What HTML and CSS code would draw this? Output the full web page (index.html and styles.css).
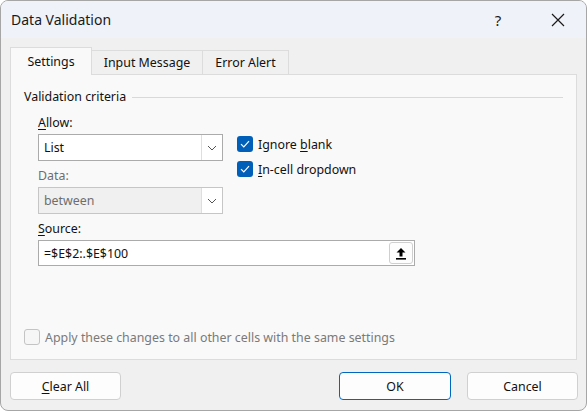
FILE: index.html
```html
<!DOCTYPE html>
<html>
<head>
<meta charset="utf-8">
<link rel="stylesheet" href="styles.css">
</head>
<body>
<div class="window">
  <div class="titlebar">
    <span class="title">Data Validation</span>
    <span class="help">?</span>
    <span class="close">
      <svg width="14" height="14" viewBox="0 0 14 14"><path d="M1 1L13 13M13 1L1 13" stroke="#1a1a1a" stroke-width="1.2" fill="none"/></svg>
    </span>
  </div>
  <div class="content">
    <div class="tabs">
      <div class="tab active t1">Settings</div>
      <div class="tab t2">Input Message</div>
      <div class="tab t3">Error Alert</div>
    </div>
    <div class="panel">
      <div class="group-head">
        <span>Validation criteria</span>
        <span class="rule"></span>
      </div>
      <div class="criteria">
        <div class="left">
          <div class="label"><u>A</u>llow:</div>
          <div class="select">
            <span class="value">List</span>
            <span class="drop"><svg width="10" height="6" viewBox="0 0 10 6"><path d="M1 1L5 5L9 1" stroke="#555" stroke-width="1" fill="none"/></svg></span>
          </div>
          <div class="label gap dim">Data:</div>
          <div class="select disabled">
            <span class="value">between</span>
            <span class="drop"><svg width="10" height="6" viewBox="0 0 10 6"><path d="M1 1L5 5L9 1" stroke="#555" stroke-width="1" fill="none"/></svg></span>
          </div>
          <div class="label gap"><u>S</u>ource:</div>
        </div>
        <div class="right">
          <div class="check-row">
            <span class="cb on"><svg width="10" height="8" viewBox="0 0 10 8"><path d="M1 4.2L3.8 7L9 1.2" stroke="#fff" stroke-width="1.2" fill="none"/></svg></span>
            <span>Ignore <u>b</u>lank</span>
          </div>
          <div class="check-row">
            <span class="cb on"><svg width="10" height="8" viewBox="0 0 10 8"><path d="M1 4.2L3.8 7L9 1.2" stroke="#fff" stroke-width="1.2" fill="none"/></svg></span>
            <span><u>I</u>n-cell dropdown</span>
          </div>
        </div>
      </div>
      <div class="source">
        <span class="value">=$E$2:.$E$100</span>
        <span class="ref-btn"><svg width="12" height="13" viewBox="0 0 12 13"><path d="M6 1L10.5 5.5H7.5V9.5H4.5V5.5H1.5Z" fill="#000"/><rect x="1" y="11" width="10" height="1.6" fill="#000"/></svg></span>
      </div>
      <div class="apply">
        <span class="cb off"></span>
        <span>Apply these changes to all other cells with the same settings</span>
      </div>
    </div>
    <div class="buttons">
      <div class="btn"><u>C</u>lear All</div>
      <div class="spacer"></div>
      <div class="btn primary">OK</div>
      <div class="btn">Cancel</div>
    </div>
  </div>
</div>
</body>
</html>
```
FILE: styles.css
```css
html, body {
  margin: 0;
  padding: 0;
  background: #ffffff;
}
body {
  font-family: "Noto Sans", "Open Sans", sans-serif;
  font-size: 12.4px;
  color: #111111;
}
u {
  text-decoration: underline;
  text-underline-offset: 2px;
}
.window {
  box-sizing: border-box;
  width: 587px;
  height: 411px;
  border: 1px solid #a6a6a6;
  border-radius: 8px;
  overflow: hidden;
  background: #f0f0f0;
  display: flex;
  flex-direction: column;
}
.titlebar {
  height: 37px;
  flex: none;
  background: #eff2f9;
  display: flex;
  align-items: center;
  padding-left: 10px;
}
.title {
  font-size: 14px;
  color: #1a1a1a;
  flex: 1;
}
.help {
  font-size: 15px;
  width: 14px;
  text-align: center;
  margin-right: 46px;
  color: #1a1a1a;
}
.close {
  width: 14px;
  height: 14px;
  margin-right: 21px;
  display: flex;
}
.content {
  padding: 9px 8px 0 9px;
  flex: 1;
  display: flex;
  flex-direction: column;
}
.tabs {
  display: flex;
  align-items: flex-end;
  height: 27px;
}
.tab {
  box-sizing: border-box;
  height: 24px;
  border: 1px solid #dcdcdc;
  border-bottom: none;
  background: #f0f0f0;
  display: flex;
  align-items: center;
  justify-content: center;
  margin-left: -1px;
}
.tab.active {
  height: 28px;
  margin-bottom: -1px;
  margin-left: 0;
  background: #f9f9f9;
  z-index: 1;
  padding-bottom: 1px;
}
.t1 { width: 82px; }
.t2 { width: 112px; }
.t3 { width: 87px; }
.panel {
  box-sizing: border-box;
  width: 567px;
  height: 286px;
  background: #f9f9f9;
  border: 1px solid #dcdcdc;
  display: flex;
  flex-direction: column;
  padding: 14px 13px 14px 13px;
}
.group-head {
  display: flex;
  align-items: center;
  height: 16px;
  line-height: 16px;
}
.group-head .rule {
  flex: 1;
  height: 1px;
  background: #d9d9d9;
  margin-left: 6px;
}
.criteria {
  display: flex;
  padding-left: 14px;
  margin-top: 10px;
}
.left {
  width: 185px;
  display: flex;
  flex-direction: column;
}
.label {
  height: 16px;
  line-height: 16px;
  margin-bottom: 3px;
}
.label.gap { margin-top: 7px; }
.label.dim { color: #6e6e6e; }
.select {
  box-sizing: border-box;
  height: 27px;
  border: 1px solid #ababab;
  background: #ffffff;
  display: flex;
  align-items: stretch;
}
.select .value {
  flex: 1;
  padding-left: 5px;
  display: flex;
  align-items: center;
}
.select .drop {
  box-sizing: border-box;
  width: 21px;
  border-left: 1px solid #dedede;
  background: #ffffff;
  display: flex;
  align-items: center;
  justify-content: center;
}
.select.disabled {
  border-color: #c6c6c6;
  background: #f0f0f0;
  color: #6e6e6e;
}
.right {
  margin-left: 14px;
  padding-top: 21px;
  display: flex;
  flex-direction: column;
  gap: 9px;
}
.check-row {
  display: flex;
  align-items: center;
  gap: 5px;
  height: 16px;
}
.cb {
  box-sizing: border-box;
  width: 16px;
  height: 16px;
  border-radius: 3px;
  display: flex;
  align-items: center;
  justify-content: center;
  flex: none;
}
.cb.on { background: #005fb8; }
.cb.off {
  border: 1px solid #c4c4c4;
  background: #f6f6f6;
}
.source {
  box-sizing: border-box;
  width: 377px;
  height: 26px;
  margin-left: 14px;
  border: 1px solid #ababab;
  background: #ffffff;
  display: flex;
  align-items: center;
  padding: 1px 1px 1px 5px;
}
.source .value { flex: 1; }
.ref-btn {
  box-sizing: border-box;
  width: 24px;
  height: 22px;
  border: 1px solid #cfcfcf;
  border-radius: 3px;
  background: #fdfdfd;
  display: flex;
  align-items: center;
  justify-content: center;
}
.apply {
  margin-top: auto;
  display: flex;
  align-items: center;
  gap: 5px;
  color: #7a7a7a;
  height: 16px;
}
.buttons {
  display: flex;
  margin-top: 12px;
  height: 28px;
}
.spacer { flex: 1; }
.btn {
  box-sizing: border-box;
  width: 111px;
  height: 28px;
  border: 1px solid #d0d0d0;
  border-radius: 4px;
  background: #fdfdfd;
  display: flex;
  align-items: center;
  justify-content: center;
}
.btn.primary {
  border-color: #0067c0;
  width: 112px;
  margin-right: 16px;
}
```
